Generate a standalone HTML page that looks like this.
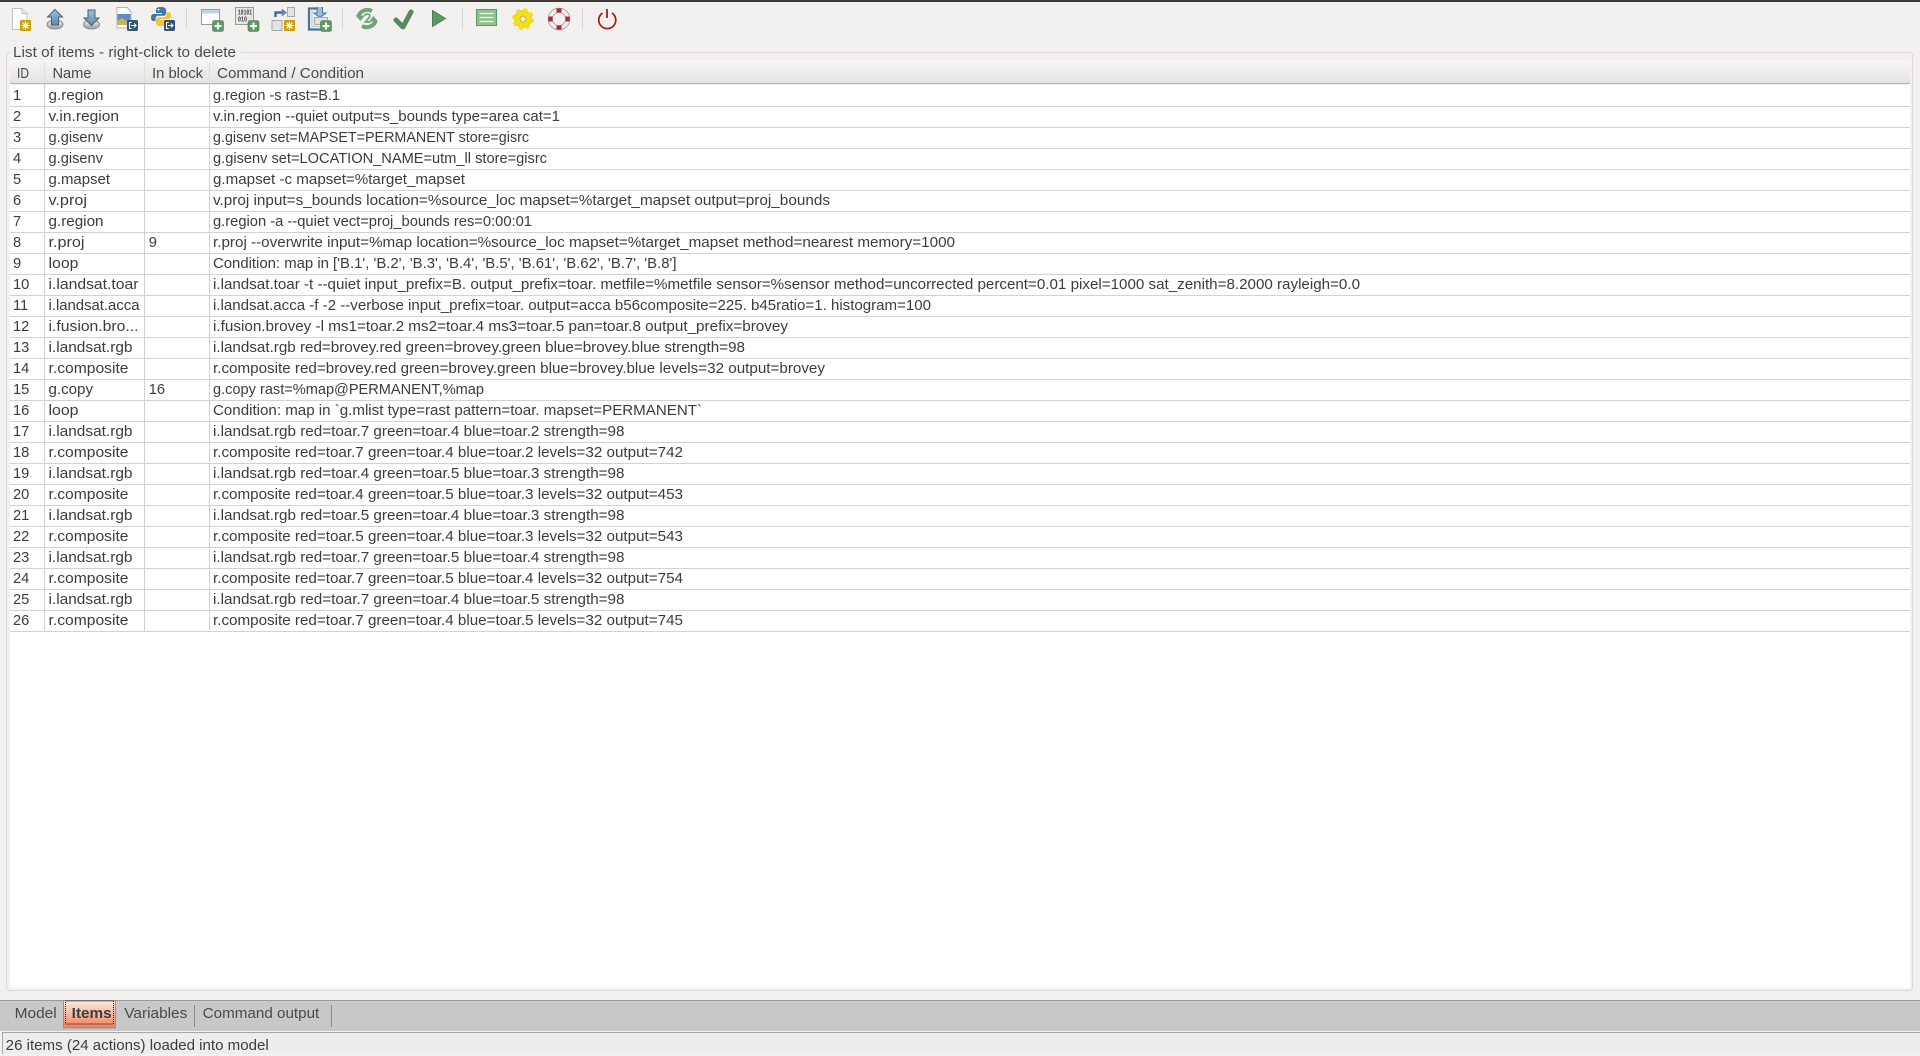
<!DOCTYPE html>
<html><head><meta charset="utf-8"><title>Model</title>
<style>
html,body{margin:0;padding:0;width:1920px;height:1056px;overflow:hidden;background:#f2f1f0}
svg{display:block}
text{font-family:"Liberation Sans",sans-serif;font-size:14.67px;fill:#3c3c3c;white-space:pre}
.h text,text.h{fill:#4a4a4a}
text.b{font-family:"Liberation Mono",monospace;font-size:7.5px;font-weight:bold;fill:#444}
</style></head><body>
<svg width="1920" height="1056" viewBox="0 0 1920 1056" xmlns="http://www.w3.org/2000/svg">
<defs>
<linearGradient id="hd" x1="0" y1="0" x2="0" y2="1"><stop offset="0" stop-color="#f7f6f5"/><stop offset="1" stop-color="#e6e4e1"/></linearGradient>
<linearGradient id="tab" x1="0" y1="0" x2="0" y2="1"><stop offset="0" stop-color="#fbeee8"/><stop offset="1" stop-color="#ee7f55"/></linearGradient>
<linearGradient id="up" x1="0" y1="0" x2="0" y2="1"><stop offset="0" stop-color="#9fc0d6"/><stop offset="1" stop-color="#5f8ba8"/></linearGradient>
<linearGradient id="bs" x1="0" y1="0" x2="0" y2="1"><stop offset="0" stop-color="#f4f4f4"/><stop offset="1" stop-color="#9a9a9a"/></linearGradient>
<g id="plus"><rect x="-5.5" y="-5.5" width="11" height="11" rx="2" fill="#5a9a63" stroke="#47804f" stroke-width=".6"/><path d="M-3.5 0H3.5M0-3.5V3.5" stroke="#fff" stroke-width="2"/></g>
<g id="sun"><rect x="-5.5" y="-5.5" width="11" height="11" rx="1" fill="#c9a100"/><circle r="2.3" fill="#fff"/><path d="M0-4.2V4.2M-4.2 0H4.2M-3-3L3 3M-3 3L3-3" stroke="#fff" stroke-width=".9"/></g>
<g id="exp"><rect x="-5.5" y="-5.5" width="11" height="11" rx="1.5" fill="#35566f"/><path d="M-.8-3H-3V3H-.8M-1.4 0H3.4M1.6-2L3.6 0L1.6 2" fill="none" stroke="#fff" stroke-width="1"/></g>
</defs>

<rect x="0" y="0" width="1920" height="2" fill="#3c3b37"/>

<!-- toolbar separators -->
<path d="M186.5 8V29M342.5 8V29M462.5 8V29M582.5 8V29" stroke="#d8d6d3" stroke-width="1"/>

<!-- 1 new doc -->
<path d="M12.5 8.5H22L27 13.5V29.5H12.5Z" fill="#fff" stroke="#c2c2c2"/><path d="M22 8.5V13.5H27" fill="#e6e6e6" stroke="#c2c2c2"/>
<use href="#sun" x="25.5" y="25.5"/>
<!-- 2 upload -->
<ellipse cx="55" cy="24.5" rx="8" ry="4.5" fill="url(#bs)" stroke="#8a8a8a"/><ellipse cx="55" cy="23" rx="4" ry="2" fill="#e8e8e8"/>
<path d="M55 9.5L62.5 17H58.5V25H51.5V17H47.5Z" fill="url(#up)" stroke="#3f6580"/>
<!-- 3 download -->
<ellipse cx="91.5" cy="24.5" rx="8" ry="4.5" fill="url(#bs)" stroke="#8a8a8a"/><ellipse cx="91.5" cy="23" rx="4" ry="2" fill="#e8e8e8"/>
<path d="M91.5 25.5L84 18H88V10H95V18H99Z" fill="url(#up)" stroke="#3f6580"/>
<!-- 4 image doc -->
<path d="M117 7.5H127L131 11.5V28H117Z" fill="#fff" stroke="#b5b5b5"/>
<rect x="117.5" y="14" width="13" height="11" fill="#5d8fc0"/><path d="M117.5 25V20.5L122 18L130.5 23.5V25Z" fill="#c8b25a"/>
<use href="#exp" x="132.5" y="25.5"/>
<!-- 5 python -->
<path d="M161 7C155.8 7 156 9 156 10.500V13H162V14H153.500C151.500 14 151 16 151 17.500C151 19.500 151.800 21 153.500 21H155.500V18.500C155.500 16.800 157 15.800 158.500 15.800H163.500C165 15.800 166 14.800 166 13.300V10C166 8 164.500 7 161 7Z" fill="#3f78a8"/>
<path d="M161 26C166.200 26 166 24 166 22.500V20H160V19H168.500C170.500 19 171 17 171 15.500C171 13.500 170.200 12 168.500 12H166.500V14.500C166.500 16.200 165 17.200 163.500 17.200H158.500C157 17.200 156 18.200 156 19.700V23C156 25 157.500 26 161 26Z" fill="#f3c53a"/>
<circle cx="158.500" cy="9.800" r="1" fill="#fff"/>
<use href="#exp" x="169.500" y="25.500"/>
<!-- 6 window add -->
<rect x="201.500" y="9.500" width="18" height="15" fill="#fff" stroke="#9a9a9a"/><rect x="202" y="10" width="17" height="3.500" fill="#bcd5ec"/>
<use href="#plus" x="218" y="26"/>
<!-- 7 binary -->
<rect x="235.500" y="7.500" width="18" height="17" fill="#e6e6e6" stroke="#9a9a9a"/>
<text class="b" x="238" y="14.500" textLength="14" lengthAdjust="spacingAndGlyphs">10101</text>
<text class="b" x="238" y="21.500" textLength="9" lengthAdjust="spacingAndGlyphs">010</text>
<use href="#plus" x="253.500" y="26"/>
<!-- 8 model -->
<rect x="287.500" y="7.500" width="7" height="9" fill="#e4e4e4" stroke="#aaa"/>
<rect x="272" y="20.500" width="10" height="10" fill="#e4e4e4" stroke="#aaa"/>
<use href="#sun" x="289.500" y="25.500"/>
<path d="M275.500 17V12.500H283" fill="none" stroke="#3f6f96" stroke-width="2.500"/><path d="M282 9L286.500 12.500L282 16Z" fill="#5f92bc" stroke="#3f6f96" stroke-width=".5"/>
<!-- 9 import -->
<path d="M319 8.500H309V29.500H322" fill="none" stroke="#46759a" stroke-width="2.200"/><path d="M312 8.500V26.500H320" fill="none" stroke="#a9c6dc" stroke-width="1"/>
<path d="M317 7V13H314L320 17.500L326 13H322.500V7" fill="#9bbdd6" stroke="#46759a" stroke-width="1"/>
<rect x="314.500" y="17.500" width="13" height="7" fill="#e2e2e2" stroke="#aaa"/>
<use href="#plus" x="326" y="26"/>
<!-- 10 refresh -->
<path d="M358.500 16C360 11.500 366 8 372 11" fill="none" stroke="#6da574" stroke-width="4"/><path d="M355.500 15.500L365 15.500L360.500 21Z" fill="#6da574"/>
<path d="M375.500 21C374 26 367.500 29 362 26" fill="none" stroke="#6da574" stroke-width="4"/><path d="M378 21.500L369 21.500L373.500 16Z" fill="#6da574"/>
<path d="M364.500 15.500C366.500 13 371 14 369.500 17L365.500 22H370.500" fill="none" stroke="#6da574" stroke-width="1.800"/>
<!-- 11 check -->
<path d="M396 20L403 27L411 12" fill="none" stroke="#568a5c" stroke-width="5" stroke-linecap="round" stroke-linejoin="round"/>
<!-- 12 play -->
<path d="M432.500 10.500L445.500 18.500L432.500 26.500Z" fill="#5c9a63" stroke="#4b8152"/>
<!-- 13 list -->
<rect x="476.500" y="9.500" width="20" height="16" fill="#8fc08f" stroke="#5f9a66"/>
<path d="M479.500 13.500H493.500M479.500 17.500H493.500M479.500 21.500H493.500" stroke="#eef6ee" stroke-width="1.300"/>
<!-- 14 gear -->
<circle cx="523" cy="19" r="8.300" fill="#f6e01a" stroke="#c4ad10" stroke-width=".6"/>
<circle cx="523" cy="19" r="9.500" fill="none" stroke="#f6e01a" stroke-width="3" stroke-dasharray="4 3.460"/>
<circle cx="523" cy="19" r="3" fill="#f2f1f0" stroke="#b8a20e" stroke-width=".8"/>
<!-- 15 lifebuoy -->
<circle cx="559" cy="19" r="8.700" fill="none" stroke="#8f8f8f" stroke-width="5"/>
<circle cx="559" cy="19" r="8.700" fill="none" stroke="#f2f0ee" stroke-width="3.600"/>
<path d="M556.500 8.500H561.500V12.500H556.500ZM556.500 25.500H561.500V29.500H556.500ZM548.500 16.500H552.500V21.500H548.500ZM565.500 16.500H569.500V21.500H565.500Z" fill="#b8252a"/>
<!-- 16 power -->
<path d="M602.500 13A8.500 8.500 0 1 0 612 13" fill="none" stroke="#a81818" stroke-width="1.700"/><path d="M607 9V18" stroke="#a81818" stroke-width="1.800"/>

<!-- group box -->
<rect x="6.500" y="52.500" width="1906" height="938" rx="3" fill="none" stroke="#dcd9d5"/>
<rect x="11" y="48" width="230" height="8" fill="#f2f1f0"/>
<text class="h" x="13" y="57" textLength="223" lengthAdjust="spacingAndGlyphs">List of items - right-click to delete</text>

<!-- table -->
<rect x="10" y="60" width="1900" height="928" fill="#fff"/>
<rect x="10" y="60" width="1900" height="23" fill="url(#hd)"/>
<rect x="10" y="83" width="1900" height="1" fill="#bcb9b4"/>
<rect x="10" y="84" width="1900" height="1" fill="#ecebea"/>
<path d="M44.500 62V82M144.500 62V82M209.500 62V82" stroke="#e0ded9"/>
<g class="h" transform="translate(0,1)">
<text x="17" y="77" textLength="12" lengthAdjust="spacingAndGlyphs">ID</text>
<text x="52.500" y="77" textLength="39" lengthAdjust="spacingAndGlyphs">Name</text>
<text x="152" y="77" textLength="51" lengthAdjust="spacingAndGlyphs">In block</text>
<text x="217" y="77" textLength="147" lengthAdjust="spacingAndGlyphs">Command / Condition</text>
</g>
<!-- grid -->
<g fill="#d2d2d2">
<rect x="10" y="106" width="1900" height="1"/><rect x="10" y="127" width="1900" height="1"/><rect x="10" y="148" width="1900" height="1"/><rect x="10" y="169" width="1900" height="1"/><rect x="10" y="190" width="1900" height="1"/><rect x="10" y="211" width="1900" height="1"/><rect x="10" y="232" width="1900" height="1"/><rect x="10" y="253" width="1900" height="1"/><rect x="10" y="274" width="1900" height="1"/><rect x="10" y="295" width="1900" height="1"/><rect x="10" y="316" width="1900" height="1"/><rect x="10" y="337" width="1900" height="1"/><rect x="10" y="358" width="1900" height="1"/><rect x="10" y="379" width="1900" height="1"/><rect x="10" y="400" width="1900" height="1"/><rect x="10" y="421" width="1900" height="1"/><rect x="10" y="442" width="1900" height="1"/><rect x="10" y="463" width="1900" height="1"/><rect x="10" y="484" width="1900" height="1"/><rect x="10" y="505" width="1900" height="1"/><rect x="10" y="526" width="1900" height="1"/><rect x="10" y="547" width="1900" height="1"/><rect x="10" y="568" width="1900" height="1"/><rect x="10" y="589" width="1900" height="1"/><rect x="10" y="610" width="1900" height="1"/><rect x="10" y="631" width="1900" height="1"/>
<rect x="44" y="84" width="1" height="547"/><rect x="144" y="84" width="1" height="547"/><rect x="209" y="84" width="1" height="547"/>
</g>
<g transform="translate(0,1)">
<!-- ids -->
<g>
<text x="13" y="99">1</text><text x="13" y="120">2</text><text x="13" y="141">3</text><text x="13" y="162">4</text><text x="13" y="183">5</text><text x="13" y="204">6</text><text x="13" y="225">7</text><text x="13" y="246">8</text><text x="13" y="267">9</text><text x="13" y="288">10</text><text x="13" y="309">11</text><text x="13" y="330">12</text><text x="13" y="351">13</text><text x="13" y="372">14</text><text x="13" y="393">15</text><text x="13" y="414">16</text><text x="13" y="435">17</text><text x="13" y="456">18</text><text x="13" y="477">19</text><text x="13" y="498">20</text><text x="13" y="519">21</text><text x="13" y="540">22</text><text x="13" y="561">23</text><text x="13" y="582">24</text><text x="13" y="603">25</text><text x="13" y="624">26</text>
</g>
<!-- names -->
<g>
<text x="48.500" y="99" textLength="55" lengthAdjust="spacingAndGlyphs">g.region</text>
<text x="48.500" y="120" textLength="70.500" lengthAdjust="spacingAndGlyphs">v.in.region</text>
<text x="48.500" y="141" textLength="54.500" lengthAdjust="spacingAndGlyphs">g.gisenv</text>
<text x="48.500" y="162" textLength="54.500" lengthAdjust="spacingAndGlyphs">g.gisenv</text>
<text x="48.500" y="183" textLength="61.500" lengthAdjust="spacingAndGlyphs">g.mapset</text>
<text x="48.500" y="204" textLength="38.500" lengthAdjust="spacingAndGlyphs">v.proj</text>
<text x="48.500" y="225" textLength="55" lengthAdjust="spacingAndGlyphs">g.region</text>
<text x="48.500" y="246" textLength="36" lengthAdjust="spacingAndGlyphs">r.proj</text>
<text x="48.500" y="267" textLength="30" lengthAdjust="spacingAndGlyphs">loop</text>
<text x="48.500" y="288" textLength="90" lengthAdjust="spacingAndGlyphs">i.landsat.toar</text>
<text x="48.500" y="309" textLength="91" lengthAdjust="spacingAndGlyphs">i.landsat.acca</text>
<text x="48.500" y="330" textLength="90" lengthAdjust="spacingAndGlyphs">i.fusion.bro...</text>
<text x="48.500" y="351" textLength="84" lengthAdjust="spacingAndGlyphs">i.landsat.rgb</text>
<text x="48.500" y="372" textLength="80" lengthAdjust="spacingAndGlyphs">r.composite</text>
<text x="48.500" y="393" textLength="44.500" lengthAdjust="spacingAndGlyphs">g.copy</text>
<text x="48.500" y="414" textLength="30" lengthAdjust="spacingAndGlyphs">loop</text>
<text x="48.500" y="435" textLength="84" lengthAdjust="spacingAndGlyphs">i.landsat.rgb</text>
<text x="48.500" y="456" textLength="80" lengthAdjust="spacingAndGlyphs">r.composite</text>
<text x="48.500" y="477" textLength="84" lengthAdjust="spacingAndGlyphs">i.landsat.rgb</text>
<text x="48.500" y="498" textLength="80" lengthAdjust="spacingAndGlyphs">r.composite</text>
<text x="48.500" y="519" textLength="84" lengthAdjust="spacingAndGlyphs">i.landsat.rgb</text>
<text x="48.500" y="540" textLength="80" lengthAdjust="spacingAndGlyphs">r.composite</text>
<text x="48.500" y="561" textLength="84" lengthAdjust="spacingAndGlyphs">i.landsat.rgb</text>
<text x="48.500" y="582" textLength="80" lengthAdjust="spacingAndGlyphs">r.composite</text>
<text x="48.500" y="603" textLength="84" lengthAdjust="spacingAndGlyphs">i.landsat.rgb</text>
<text x="48.500" y="624" textLength="80" lengthAdjust="spacingAndGlyphs">r.composite</text>
</g>
<text x="148.700" y="246">9</text>
<text x="148.700" y="393">16</text>
<!-- commands -->
<g>
<text x="213" y="99" textLength="127" lengthAdjust="spacingAndGlyphs">g.region -s rast=B.1</text>
<text x="213" y="120" textLength="347" lengthAdjust="spacingAndGlyphs">v.in.region --quiet output=s_bounds type=area cat=1</text>
<text x="213" y="141" textLength="316" lengthAdjust="spacingAndGlyphs">g.gisenv set=MAPSET=PERMANENT store=gisrc</text>
<text x="213" y="162" textLength="334" lengthAdjust="spacingAndGlyphs">g.gisenv set=LOCATION_NAME=utm_ll store=gisrc</text>
<text x="213" y="183" textLength="252" lengthAdjust="spacingAndGlyphs">g.mapset -c mapset=%target_mapset</text>
<text x="213" y="204" textLength="617" lengthAdjust="spacingAndGlyphs">v.proj input=s_bounds location=%source_loc mapset=%target_mapset output=proj_bounds</text>
<text x="213" y="225" textLength="319" lengthAdjust="spacingAndGlyphs">g.region -a --quiet vect=proj_bounds res=0:00:01</text>
<text x="213" y="246" textLength="742" lengthAdjust="spacingAndGlyphs">r.proj --overwrite input=%map location=%source_loc mapset=%target_mapset method=nearest memory=1000</text>
<text x="213" y="267" textLength="463.500" lengthAdjust="spacingAndGlyphs">Condition: map in ['B.1', 'B.2', 'B.3', 'B.4', 'B.5', 'B.61', 'B.62', 'B.7', 'B.8']</text>
<text x="213" y="288" textLength="1147" lengthAdjust="spacingAndGlyphs">i.landsat.toar -t --quiet input_prefix=B. output_prefix=toar. metfile=%metfile sensor=%sensor method=uncorrected percent=0.01 pixel=1000 sat_zenith=8.2000 rayleigh=0.0</text>
<text x="213" y="309" textLength="718" lengthAdjust="spacingAndGlyphs">i.landsat.acca -f -2 --verbose input_prefix=toar. output=acca b56composite=225. b45ratio=1. histogram=100</text>
<text x="213" y="330" textLength="575" lengthAdjust="spacingAndGlyphs">i.fusion.brovey -l ms1=toar.2 ms2=toar.4 ms3=toar.5 pan=toar.8 output_prefix=brovey</text>
<text x="213" y="351" textLength="532" lengthAdjust="spacingAndGlyphs">i.landsat.rgb red=brovey.red green=brovey.green blue=brovey.blue strength=98</text>
<text x="213" y="372" textLength="612" lengthAdjust="spacingAndGlyphs">r.composite red=brovey.red green=brovey.green blue=brovey.blue levels=32 output=brovey</text>
<text x="213" y="393" textLength="271" lengthAdjust="spacingAndGlyphs">g.copy rast=%map@PERMANENT,%map</text>
<text x="213" y="414" textLength="489" lengthAdjust="spacingAndGlyphs">Condition: map in `g.mlist type=rast pattern=toar. mapset=PERMANENT`</text>
<text x="213" y="435" textLength="411.500" lengthAdjust="spacingAndGlyphs">i.landsat.rgb red=toar.7 green=toar.4 blue=toar.2 strength=98</text>
<text x="213" y="456" textLength="470" lengthAdjust="spacingAndGlyphs">r.composite red=toar.7 green=toar.4 blue=toar.2 levels=32 output=742</text>
<text x="213" y="477" textLength="411.500" lengthAdjust="spacingAndGlyphs">i.landsat.rgb red=toar.4 green=toar.5 blue=toar.3 strength=98</text>
<text x="213" y="498" textLength="470" lengthAdjust="spacingAndGlyphs">r.composite red=toar.4 green=toar.5 blue=toar.3 levels=32 output=453</text>
<text x="213" y="519" textLength="411.500" lengthAdjust="spacingAndGlyphs">i.landsat.rgb red=toar.5 green=toar.4 blue=toar.3 strength=98</text>
<text x="213" y="540" textLength="470" lengthAdjust="spacingAndGlyphs">r.composite red=toar.5 green=toar.4 blue=toar.3 levels=32 output=543</text>
<text x="213" y="561" textLength="411.500" lengthAdjust="spacingAndGlyphs">i.landsat.rgb red=toar.7 green=toar.5 blue=toar.4 strength=98</text>
<text x="213" y="582" textLength="470" lengthAdjust="spacingAndGlyphs">r.composite red=toar.7 green=toar.5 blue=toar.4 levels=32 output=754</text>
<text x="213" y="603" textLength="411.500" lengthAdjust="spacingAndGlyphs">i.landsat.rgb red=toar.7 green=toar.4 blue=toar.5 strength=98</text>
<text x="213" y="624" textLength="470" lengthAdjust="spacingAndGlyphs">r.composite red=toar.7 green=toar.4 blue=toar.5 levels=32 output=745</text>
</g>
</g>

<!-- tab bar -->
<rect x="0" y="1000" width="1920" height="31" fill="#c8c8c8"/>
<rect x="0" y="1000" width="1920" height="1" fill="#9a9a9a"/>
<rect x="63.500" y="1000.500" width="52" height="27.500" fill="url(#tab)" stroke="#9b8f88"/>
<rect x="65.500" y="1001" width="48" height="23" fill="none" stroke="#111" stroke-width="1" stroke-dasharray="1 1"/>
<text class="h" x="14.700" y="1018" textLength="42" lengthAdjust="spacingAndGlyphs">Model</text>
<text x="71.700" y="1018" textLength="40" lengthAdjust="spacingAndGlyphs" style="font-weight:bold">Items</text>
<text class="h" x="124.300" y="1018" textLength="63" lengthAdjust="spacingAndGlyphs">Variables</text>
<text class="h" x="202.700" y="1018" textLength="116.600" lengthAdjust="spacingAndGlyphs">Command output</text>
<path d="M194.500 1005V1027M331.500 1005V1027" stroke="#8d8d8d"/>

<!-- status bar -->
<rect x="0" y="1031" width="1920" height="25" fill="#f2f1f0"/>
<rect x="2" y="1032" width="1918" height="1" fill="#a9a6a2"/>
<rect x="2" y="1032" width="1" height="22" fill="#a9a6a2"/>
<rect x="3" y="1033" width="1917" height="21" fill="#eeedeb"/>
<text x="5.700" y="1050" textLength="263" lengthAdjust="spacingAndGlyphs">26 items (24 actions) loaded into model</text>
</svg>
</body></html>
